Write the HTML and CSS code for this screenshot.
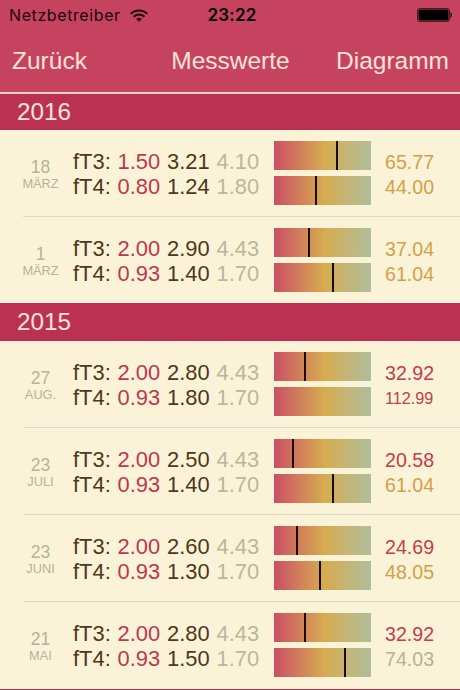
FILE: index.html
```html
<!DOCTYPE html>
<html lang="de">
<head>
    <meta charset="UTF-8">
    <meta name="viewport" content="width=device-width, initial-scale=1.0">
    <title>Messwerte</title>
    <link rel="stylesheet" href="styles.css">
</head>
<body>
    <header class="top">
        <div class="status-bar">
            <div class="carrier">
                <span>Netzbetreiber</span>
                <svg class="wifi" width="18" height="13" viewBox="0 0 18 13" fill="none" stroke="#1c060b" stroke-width="2">
                    <path d="M0.7 4.9C5.3 0.3 12.7 0.3 17.3 4.9"/>
                    <path d="M3.6 7.8C6.6 4.8 11.4 4.8 14.4 7.8"/>
                    <path d="M9 12.7L6.2 9.9C7.8 8.4 10.2 8.4 11.8 9.9Z" fill="#1c060b" stroke="none"/>
                </svg>
            </div>
            <span class="clock">23:22</span>
            <svg class="battery" width="36" height="14" viewBox="0 0 36 14">
                <rect x="0.5" y="0.5" width="32" height="13" rx="2" fill="none" stroke="#000" stroke-opacity="0.6"/>
                <rect x="1.5" y="1.5" width="30" height="11" rx="1" fill="#000"/>
                <path d="M33.5 4.3C35.4 5 35.4 9 33.5 9.7Z" fill="#000"/>
            </svg>
        </div>
        <nav class="nav-bar">
            <a class="nav-item" href="#">Zurück</a>
            <span class="nav-item nav-title">Messwerte</span>
            <a class="nav-item nav-right" href="#">Diagramm</a>
        </nav>
    </header>

    <main id="list"></main>

    <script src="app.js"></script>
</body>
</html>
```

FILE: styles.css
```css
* {
    box-sizing: border-box;
}

body {
    margin: 0;
    height: 690px;
    overflow: hidden;
    background-color: #bd3352;
    font-family: "Liberation Sans", Arial, sans-serif;
}

/* Status bar and navigation */
.top {
    height: 94px;
    background-color: #c5435f;
    border-bottom: 2px solid #f7d5c4;
}

.status-bar {
    display: grid;
    grid-template-columns: 1fr auto 1fr;
    align-items: center;
    height: 30px;
    padding: 0 7px 0 9px;
    font-family: Inter, sans-serif;
    font-size: 16px;
    color: #1c060b;
}

.carrier {
    display: flex;
    align-items: center;
    gap: 9px;
    letter-spacing: 0.6px;
}

.clock {
    padding-left: 2px;
    font-size: 17px;
    font-weight: 600;
    letter-spacing: 0.2px;
    color: #000;
}

.battery {
    justify-self: end;
}

.nav-bar {
    display: grid;
    grid-template-columns: 1fr auto 1fr;
    align-items: center;
    height: 62px;
    padding: 0 11px 0 12px;
}

.nav-item {
    font-size: 24.5px;
    color: #fde3d3;
    text-decoration: none;
}

.nav-right {
    justify-self: end;
}

/* Year sections */
.year {
    margin: 0;
    height: 38px;
    padding-left: 17px;
    background-color: #bb3152;
    font-size: 24.3px;
    font-weight: normal;
    line-height: 38px;
    color: #fce6d5;
}

.section:first-child .year {
    height: 36px;
    line-height: 35px;
}

.entries {
    background-color: #fbf3d7;
}

.entry {
    display: grid;
    grid-template-columns: 50px 201px 97px 1fr;
    height: 87px;
    margin-left: 23px;
    border-bottom: 1px solid #dfd9c9;
}

.entry:last-child {
    border-bottom: none;
}

.section:first-child .entry:last-child {
    height: 86px;
}

.date {
    width: 35px;
    padding-top: 27px;
    display: flex;
    flex-direction: column;
    align-items: center;
    color: #b4b499;
}

.day {
    font-size: 17.5px;
    line-height: 20px;
}

.month {
    font-size: 12.8px;
    line-height: 14px;
}

.values {
    padding-top: 19px;
}

.value-row {
    display: grid;
    grid-template-columns: 44.5px 49.5px 49.5px 1fr;
    font-size: 21.9px;
    line-height: 25px;
    color: #4f3717;
}

.low {
    color: #be3650;
}

.high {
    color: #b7b89c;
}

.bars {
    display: flex;
    flex-direction: column;
    gap: 6px;
    padding-top: 11px;
}

.bar {
    height: 29px;
    background: linear-gradient(to right, #cb4f64 0%, #d6ac50 52%, #b0be9c 100%);
}

.marker {
    width: 2px;
    height: 100%;
    background-color: #1a0c02;
}

.percents {
    padding: 20px 0 0 14px;
}

.percent {
    height: 25px;
    font-size: 19.6px;
    line-height: 25px;
}

.percent.long {
    font-size: 16.2px;
}

.percent.red {
    color: #c23c4e;
}

.percent.yellow {
    color: #d49f49;
}

.percent.green {
    color: #b0b398;
}
```

FILE: app.js
```js
// value: [min, measured, max, percent, color]
const sections = [
    {
        year: 2016,
        entries: [
            { day: 18, month: 'MÄRZ', ft3: ['1.50', '3.21', '4.10', '65.77', 'yellow'], ft4: ['0.80', '1.24', '1.80', '44.00', 'yellow'] },
            { day: 1, month: 'MÄRZ', ft3: ['2.00', '2.90', '4.43', '37.04', 'yellow'], ft4: ['0.93', '1.40', '1.70', '61.04', 'yellow'] }
        ]
    },
    {
        year: 2015,
        entries: [
            { day: 27, month: 'AUG.', ft3: ['2.00', '2.80', '4.43', '32.92', 'red'], ft4: ['0.93', '1.80', '1.70', '112.99', 'red'] },
            { day: 23, month: 'JULI', ft3: ['2.00', '2.50', '4.43', '20.58', 'red'], ft4: ['0.93', '1.40', '1.70', '61.04', 'yellow'] },
            { day: 23, month: 'JUNI', ft3: ['2.00', '2.60', '4.43', '24.69', 'red'], ft4: ['0.93', '1.30', '1.70', '48.05', 'yellow'] },
            { day: 21, month: 'MAI', ft3: ['2.00', '2.80', '4.43', '32.92', 'red'], ft4: ['0.93', '1.50', '1.70', '74.03', 'green'] }
        ]
    }
];

function valueRow(name, v) {
    return `<div class="value-row">
        <span>${name}:</span><span class="low">${v[0]}</span><span>${v[1]}</span><span class="high">${v[2]}</span>
    </div>`;
}

function bar(v) {
    // Values above the range have no marker
    const marker = v[3] <= 100 ? `<div class="marker" style="margin-left: calc(${v[3]}% - 1.5px)"></div>` : '';
    return `<div class="bar">${marker}</div>`;
}

function percent(v) {
    return `<div class="percent ${v[4]}${v[3].length > 5 ? ' long' : ''}">${v[3]}</div>`;
}

function entry(e) {
    return `<div class="entry">
        <div class="date"><span class="day">${e.day}</span><span class="month">${e.month}</span></div>
        <div class="values">${valueRow('fT3', e.ft3)}${valueRow('fT4', e.ft4)}</div>
        <div class="bars">${bar(e.ft3)}${bar(e.ft4)}</div>
        <div class="percents">${percent(e.ft3)}${percent(e.ft4)}</div>
    </div>`;
}

document.getElementById('list').innerHTML = sections.map(s => `
    <section class="section">
        <h2 class="year">${s.year}</h2>
        <div class="entries">${s.entries.map(entry).join('')}</div>
    </section>`).join('');
```
